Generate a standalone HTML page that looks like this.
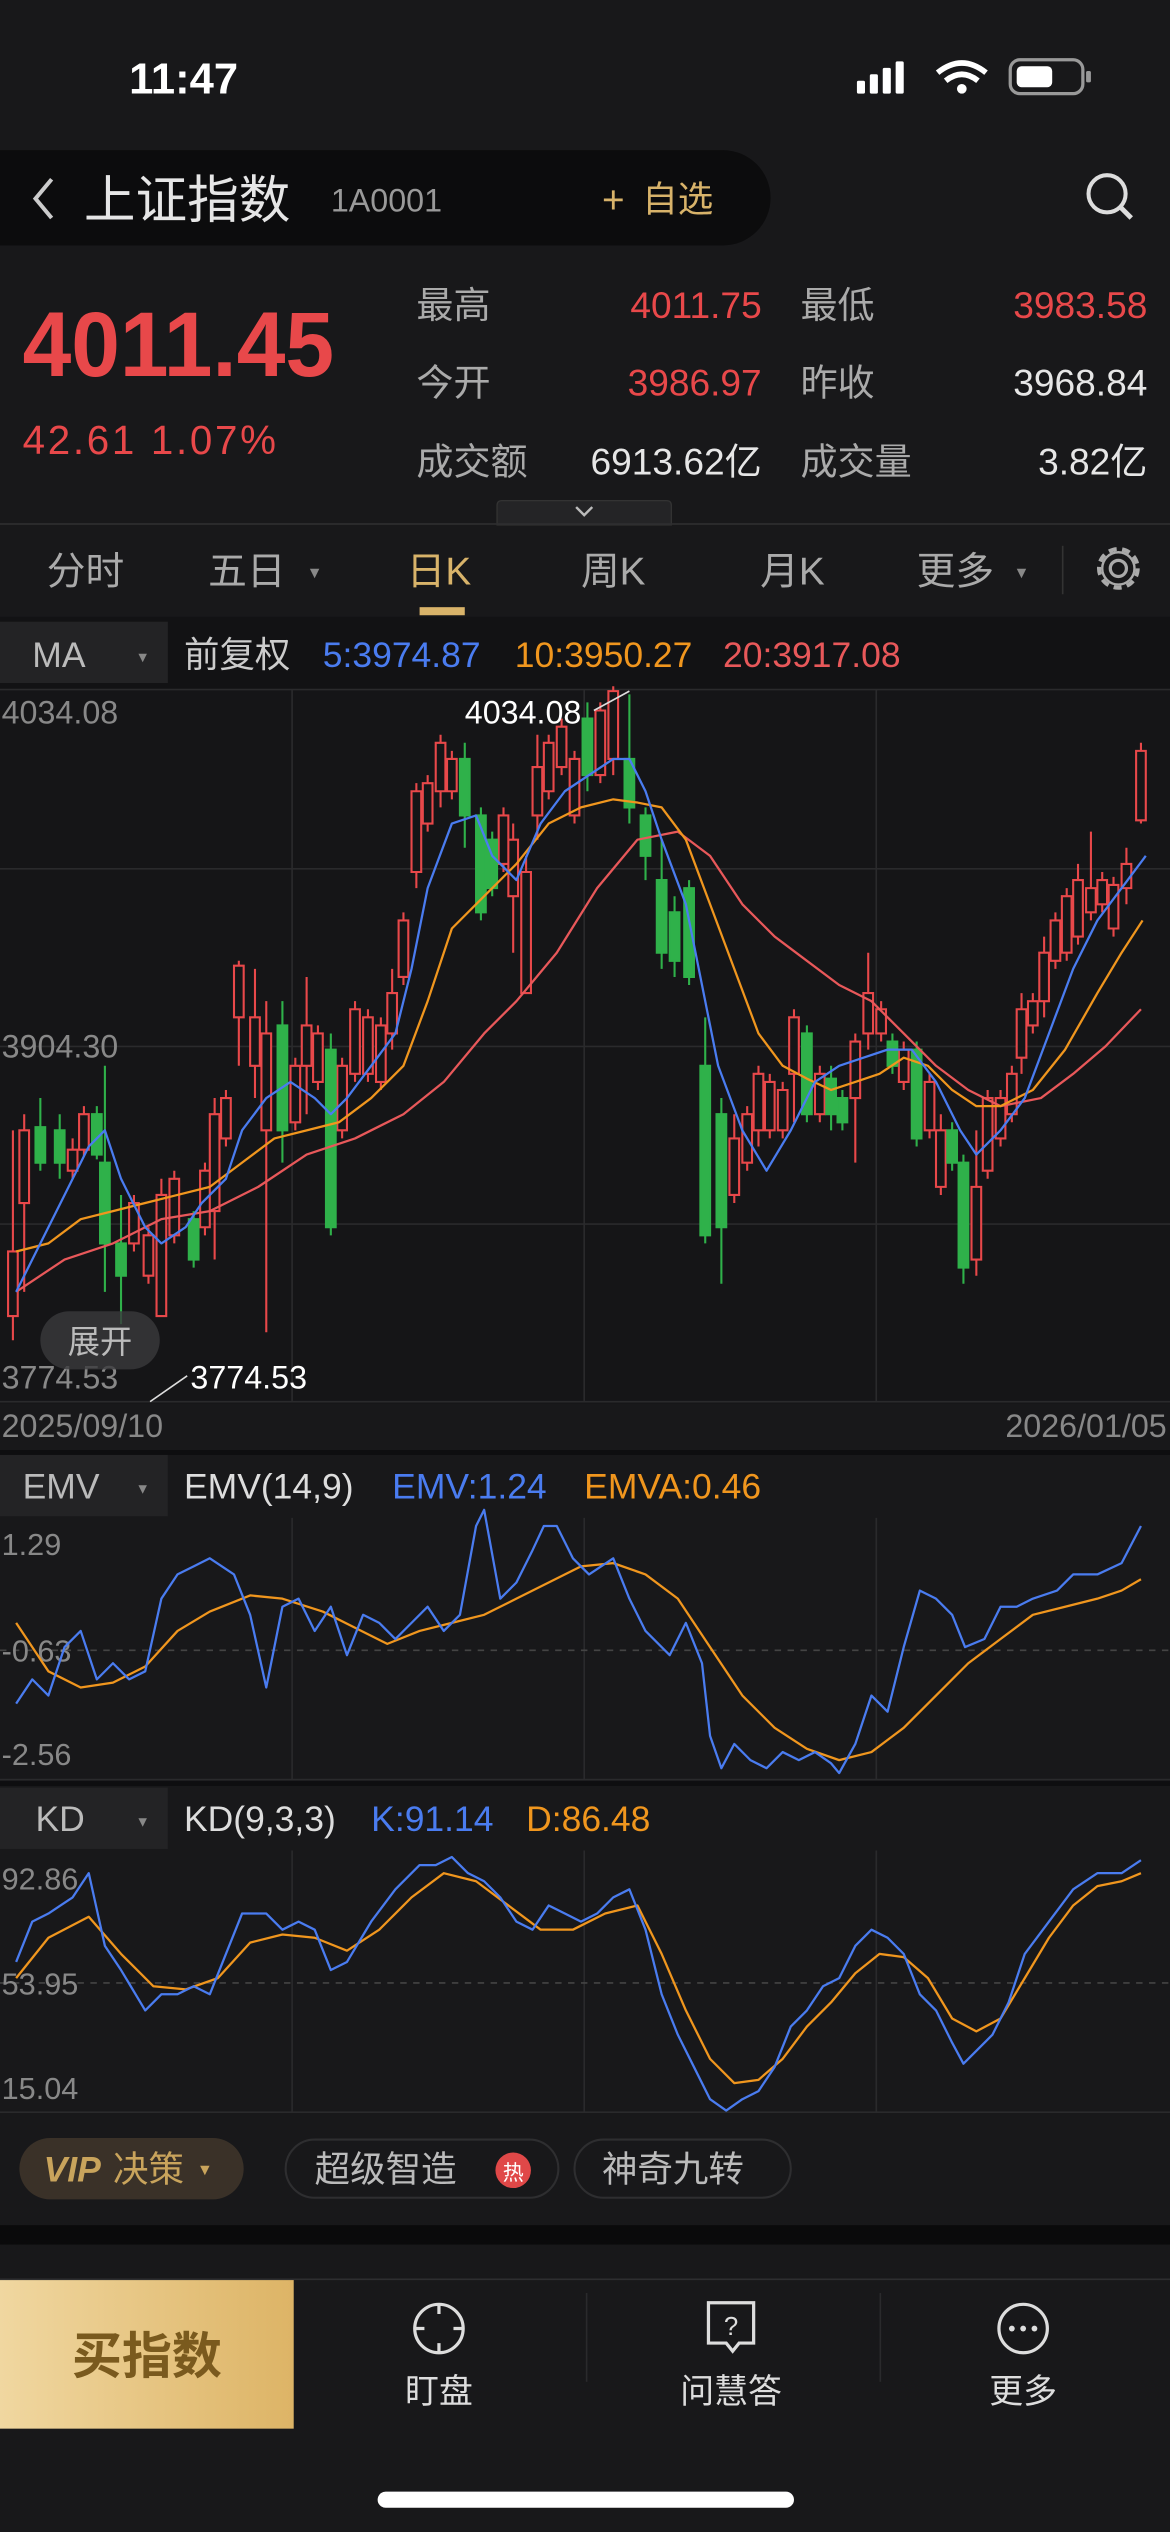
<!DOCTYPE html>
<html><head><meta charset="utf-8"><style>
html,body{margin:0;padding:0;background:#18181a;}
svg{display:block;}
text{font-family:"Liberation Sans","Noto Sans CJK SC",sans-serif;}
</style></head><body>
<svg width="1170" height="2532" viewBox="0 0 725 1568" preserveAspectRatio="none" xmlns="http://www.w3.org/2000/svg">
<rect width="725" height="1568" fill="#18181a"/>
<!-- status bar -->
<text x="80" y="58" font-size="27" font-weight="bold" fill="#fff">11:47</text>
<rect x="531" y="50" width="5" height="8" rx="1" fill="#fff"/><rect x="539" y="46" width="5" height="12" rx="1" fill="#fff"/><rect x="547" y="42" width="5" height="16" rx="1" fill="#fff"/><rect x="555" y="38" width="5" height="20" rx="1" fill="#fff"/>
<path d="M581 45 Q596 33 611 45" stroke="#fff" stroke-width="3.5" fill="none"/><path d="M586 50 Q596 42 606 50" stroke="#fff" stroke-width="3.5" fill="none"/><circle cx="596" cy="55" r="3" fill="#fff"/>
<rect x="626" y="37" width="45" height="21" rx="6" fill="none" stroke="#999" stroke-width="2"/><rect x="630" y="41" width="22" height="13" rx="3" fill="#fff"/><rect x="673" y="44" width="3" height="7" rx="1" fill="#999"/>
<!-- header -->
<path d="M0 93 H448 A29.5 29.5 0 0 1 448 152 H0 Z" fill="#0c0c0d"/>
<path d="M32 111 L22 123 L32 135" stroke="#ccc" stroke-width="2.5" fill="none"/>
<text x="52" y="135" font-size="32" fill="#e6e6e6">上证指数</text>
<text x="205" y="131" font-size="20" fill="#999">1A0001</text>
<text x="373" y="132" font-size="24" fill="#d8b36a">+</text>
<text x="398" y="131" font-size="22" fill="#d8b36a">自选</text>
<circle cx="686" cy="120" r="11.5" stroke="#ddd" stroke-width="2.5" fill="none"/><path d="M694 128 L701 135" stroke="#ddd" stroke-width="3"/>
<!-- price -->
<text x="14" y="233" font-size="57" font-weight="bold" fill="#e8484a" textLength="193" lengthAdjust="spacingAndGlyphs">4011.45</text>
<text x="14" y="281" font-size="25" fill="#e8484a" textLength="157" lengthAdjust="spacing">42.61  1.07%</text>
<g font-size="23" fill="#aaa"><text x="258" y="197">最高</text><text x="496" y="197">最低</text><text x="258" y="245">今开</text><text x="496" y="245">昨收</text><text x="258" y="294">成交额</text><text x="496" y="294">成交量</text></g>
<g font-size="23" text-anchor="end"><text x="472" y="197" fill="#e8484a">4011.75</text><text x="711" y="197" fill="#e8484a">3983.58</text><text x="472" y="245" fill="#e8484a">3986.97</text><text x="711" y="245" fill="#e6e6e6">3968.84</text><text x="472" y="294" fill="#e6e6e6">6913.62亿</text><text x="711" y="294" fill="#e6e6e6">3.82亿</text></g>
<path d="M308 325 V313 Q308 310 311 310 H413 Q416 310 416 313 V325 Z" fill="#242426" stroke="#333" stroke-width="0.8"/>
<path d="M357 314 L362 319 L367 314" stroke="#bbb" stroke-width="1.5" fill="none"/>
<rect x="0" y="324" width="725" height="1" fill="#2e2e30"/>
<!-- tabs -->
<g font-size="24" fill="#aaa"><text x="29" y="362">分时</text><text x="129" y="362">五日</text><text x="360" y="362">周K</text><text x="471" y="362">月K</text><text x="568" y="362">更多</text></g>
<g font-size="10" fill="#888"><text x="190" y="358">▼</text><text x="628" y="358">▼</text></g>
<text x="252" y="362" font-size="24" fill="#d8b36a">日K</text>
<rect x="260" y="376" width="28" height="5" fill="#d8b36a"/>
<rect x="658" y="338" width="1" height="30" fill="#333"/>
<circle cx="693" cy="352" r="5" stroke="#aaa" stroke-width="2" fill="none"/><circle cx="693" cy="352" r="12" stroke="#aaa" stroke-width="2.5" stroke-dasharray="5 3.4" fill="none"/><circle cx="693" cy="352" r="10" stroke="#aaa" stroke-width="1.5" fill="none"/>
<!-- MA row -->
<rect x="0" y="382" width="725" height="45" fill="#121214"/>
<rect x="0" y="385" width="104" height="38" fill="#232325"/>
<text x="20" y="413" font-size="22" fill="#bbb">MA</text><text x="84" y="410" font-size="9" fill="#888">▼</text>
<text x="114" y="413" font-size="22" fill="#ccc">前复权</text>
<text x="200" y="413" font-size="22" fill="#4a7cf0">5:3974.87</text>
<text x="319" y="413" font-size="22" fill="#f0961e">10:3950.27</text>
<text x="448" y="413" font-size="22" fill="#e8585a">20:3917.08</text>
<!-- main chart -->
<rect x="0" y="427" width="725" height="442" fill="#151517"/>
<g stroke="#2a2a2c" stroke-width="1"><path d="M0 427H725M0 538H725M0 648H725M0 758H725M0 868H725M181 427V868M362 427V868M543 427V868"/></g>
<g id="candles" stroke-width="1.3">
<g stroke="#e8484a" fill="#151517">
<path d="M8 700V830M15 690V800M45 705V730M52 685V716M83 740V775M92 760V795M100 730V815M108 725V770M127 720V765M133 680V780M140 675V710M148 595V660M158 600V680M165 620V825M183 655V700M190 605V690M197 635V675M212 655V705M220 620V670M228 625V670M236 630V675M243 600V650M250 565V610M258 485V550M265 480V515M273 455V500M280 465V495M312 500V540M318 510V590M326 530V615M333 455V520M340 455V495M348 445V480M356 465V510M372 435V485M380 425V480M455 690V745M463 685V725M470 660V710M477 665V705M485 670V705M492 625V695M508 660V695M530 640V720M538 590V650M546 620V645M560 645V675M576 665V705M583 690V740M605 700V790M612 675V730M620 675V710M627 660V695M633 615V665M640 615V640M647 580V630M654 565V600M661 550V595M668 535V585M676 515V570M683 540V565M690 543V580M698 525V560M707 460V510"/>
<path d="M5 775h6v40h-6zM12 700h6v45h-6zM42 712h6v13h-6zM49 690h6v22h-6zM80 745h6v25h-6zM89 765h6v25h-6zM97 740h6v75h-6zM105 730h6v35h-6zM124 725h6v35h-6zM130 690h6v60h-6zM137 680h6v25h-6zM145 598h6v32h-6zM155 630h6v30h-6zM162 640h6v60h-6zM180 660h6v35h-6zM187 635h6v25h-6zM194 640h6v30h-6zM209 660h6v40h-6zM217 625h6v40h-6zM225 630h6v35h-6zM233 635h6v35h-6zM240 615h6v25h-6zM247 570h6v35h-6zM255 490h6v50h-6zM262 485h6v25h-6zM270 460h6v30h-6zM277 470h6v20h-6zM309 505h6v30h-6zM315 520h6v35h-6zM323 540h6v75h-6zM330 475h6v30h-6zM337 460h6v30h-6zM345 450h6v25h-6zM353 470h6v35h-6zM369 440h6v40h-6zM377 428h6v42h-6zM452 705h6v35h-6zM460 690h6v30h-6zM467 665h6v35h-6zM474 670h6v30h-6zM482 675h6v25h-6zM489 630h6v35h-6zM505 665h6v25h-6zM527 645h6v35h-6zM535 615h6v25h-6zM543 625h6v15h-6zM557 650h6v20h-6zM573 670h6v30h-6zM580 700h6v35h-6zM602 735h6v45h-6zM609 680h6v45h-6zM617 680h6v25h-6zM624 665h6v25h-6zM630 625h6v30h-6zM637 620h6v15h-6zM644 590h6v30h-6zM651 570h6v25h-6zM658 555h6v35h-6zM665 545h6v35h-6zM673 550h6v15h-6zM680 545h6v15h-6zM687 548h6v27h-6zM695 535h6v15h-6zM704 465h6v43h-6z"/>
</g>
<g stroke="#2fb14a" fill="#2fb14a">
<path d="M25 680V725M37 690V730M60 685V718M65 660V800M75 740V820M120 750V785M175 620V720M205 640V765M288 460V525M298 500V570M305 515V555M364 435V490M390 430V510M400 500V545M410 520V600M418 555V605M427 545V610M437 630V770M447 680V795M500 635V695M515 660V700M522 675V700M553 640V665M568 645V710M590 695V725M597 715V795"/>
<path d="M22 698h6v22h-6zM34 700h6v20h-6zM57 690h6v25h-6zM62 720h6v50h-6zM72 770h6v20h-6zM117 755h6v25h-6zM172 635h6v65h-6zM202 650h6v110h-6zM285 470h6v35h-6zM295 505h6v60h-6zM302 520h6v30h-6zM361 445h6v35h-6zM387 470h6v30h-6zM397 505h6v25h-6zM407 545h6v45h-6zM415 565h6v30h-6zM424 550h6v55h-6zM434 660h6v105h-6zM444 690h6v70h-6zM497 640h6v50h-6zM512 668h6v22h-6zM519 680h6v15h-6zM550 645h6v15h-6zM565 650h6v55h-6zM587 700h6v20h-6zM594 720h6v65h-6z"/>
</g>
</g>
<g fill="none" stroke-width="1.4" stroke-linejoin="round">
<polyline stroke="#e8585a" points="10,800 40,780 70,770 100,755 130,750 160,735 190,715 220,705 250,690 275,670 300,640 320,620 345,590 370,550 395,520 420,515 440,530 460,560 480,580 500,595 520,610 540,620 560,640 580,660 600,675 620,685 645,680 665,665 685,648 707,625"/>
<polyline stroke="#f0961e" points="10,775 30,770 50,755 70,750 90,745 110,740 130,735 150,720 170,705 190,700 210,695 230,680 250,660 265,620 280,575 300,555 320,535 340,510 360,500 380,495 395,497 410,500 425,520 440,560 455,600 470,640 485,660 500,668 515,675 530,670 545,665 560,655 575,660 590,675 605,685 620,685 640,675 660,650 680,615 695,590 708,570"/>
<polyline stroke="#4a7cf0" points="10,800 20,780 40,740 55,710 65,700 75,730 90,760 100,770 115,760 125,745 140,730 150,700 165,680 180,670 195,680 205,690 215,680 230,660 245,640 255,600 265,550 280,510 295,505 305,530 320,545 335,510 350,490 365,480 380,470 390,470 400,490 410,520 425,560 435,610 445,660 460,700 475,725 490,700 505,670 520,660 535,655 550,650 565,650 580,670 595,700 605,715 620,700 635,680 650,640 665,600 680,570 695,550 710,530"/>
</g>
<g font-size="20" fill="#888"><text x="1" y="448">4034.08</text><text x="1" y="655">3904.30</text><text x="1" y="860">3774.53</text><text x="1" y="890">2025/09/10</text><text x="723" y="890" text-anchor="end">2026/01/05</text></g>
<text x="288" y="448" font-size="20" fill="#fff">4034.08</text><path d="M368 440 L390 428" stroke="#ddd" stroke-width="1"/>
<text x="118" y="860" font-size="20" fill="#fff">3774.53</text><path d="M93 868 L116 852" stroke="#ddd" stroke-width="1"/>
<rect x="25" y="812" width="74" height="36" rx="18" fill="#3a3a3c" fill-opacity="0.8"/><text x="62" y="838" font-size="20" fill="#bbb" text-anchor="middle">展开</text>
<!-- EMV -->
<rect x="0" y="898" width="725" height="3" fill="#0e0e10"/>
<rect x="0" y="901" width="104" height="38" fill="#232325"/>
<text x="14" y="928" font-size="22" fill="#bbb">EMV</text><text x="84" y="925" font-size="9" fill="#888">▼</text>
<text x="114" y="928" font-size="22" fill="#ddd">EMV(14,9)</text><text x="243" y="928" font-size="22" fill="#4a7cf0">EMV:1.24</text><text x="362" y="928" font-size="22" fill="#f0961e">EMVA:0.46</text>
<g stroke="#2a2a2c"><path d="M181 940V1102M362 940V1102M543 940V1102M0 1102H725"/></g>
<path d="M0 1022H725" stroke="#444" stroke-dasharray="4 4"/>
<g font-size="19" fill="#888"><text x="1" y="963">1.29</text><text x="1" y="1029">-0.63</text><text x="1" y="1093">-2.56</text></g>
<g fill="none" stroke-width="1.4" stroke-linejoin="round">
<polyline stroke="#f0961e" points="10,1005 30,1035 50,1045 70,1042 90,1032 110,1010 130,998 155,988 175,990 200,998 220,1008 240,1018 260,1010 280,1005 300,1000 320,990 340,980 360,970 380,968 400,975 420,990 440,1020 460,1050 480,1070 500,1083 520,1090 540,1085 560,1070 580,1050 600,1030 620,1015 640,1000 660,995 680,990 695,985 707,978"/>
<polyline stroke="#4a7cf0" points="10,1055 20,1040 30,1050 40,1020 50,1010 60,1040 70,1030 80,1040 90,1035 100,990 110,975 120,970 130,965 145,975 155,1000 165,1045 175,995 185,990 195,1010 205,995 215,1025 225,1000 235,1005 245,1015 255,1005 265,995 275,1010 285,1000 295,945 300,935 310,990 320,980 330,960 337,945 345,945 355,965 365,975 380,965 390,990 400,1010 415,1025 425,1005 435,1030 440,1075 447,1095 455,1080 465,1090 475,1095 485,1085 495,1090 505,1085 515,1092 520,1098 530,1080 540,1050 550,1060 560,1020 570,985 580,990 590,1000 598,1020 610,1015 620,995 630,995 640,990 655,985 665,975 680,975 695,968 707,945"/>
</g>
<!-- KD -->
<rect x="0" y="1103" width="725" height="3" fill="#0e0e10"/>
<rect x="0" y="1107" width="104" height="38" fill="#232325"/>
<text x="22" y="1134" font-size="22" fill="#bbb">KD</text><text x="84" y="1131" font-size="9" fill="#888">▼</text>
<text x="114" y="1134" font-size="22" fill="#ddd">KD(9,3,3)</text><text x="230" y="1134" font-size="22" fill="#4a7cf0">K:91.14</text><text x="326" y="1134" font-size="22" fill="#f0961e">D:86.48</text>
<g stroke="#2a2a2c"><path d="M181 1146V1308M362 1146V1308M543 1146V1308M0 1308H725"/></g>
<path d="M0 1228H725" stroke="#444" stroke-dasharray="4 4"/>
<g font-size="19" fill="#888"><text x="1" y="1170">92.86</text><text x="1" y="1235">53.95</text><text x="1" y="1300">15.04</text></g>
<g fill="none" stroke-width="1.4" stroke-linejoin="round">
<polyline stroke="#f0961e" points="10,1225 30,1200 55,1187 75,1210 95,1230 115,1232 135,1225 155,1203 175,1198 195,1200 215,1208 235,1195 255,1175 275,1160 295,1165 315,1180 335,1195 355,1195 375,1185 395,1180 410,1210 425,1245 440,1275 455,1290 470,1288 485,1275 500,1255 515,1240 530,1222 545,1210 560,1212 575,1225 590,1250 605,1258 620,1250 635,1225 650,1200 665,1180 680,1168 695,1165 707,1160"/>
<polyline stroke="#4a7cf0" points="10,1215 20,1190 30,1185 45,1175 55,1160 65,1205 75,1220 90,1245 100,1235 110,1235 120,1230 130,1235 140,1210 150,1185 165,1185 175,1195 185,1190 195,1195 205,1220 215,1215 230,1190 245,1170 260,1155 270,1155 280,1150 290,1160 300,1165 310,1175 320,1190 330,1195 340,1180 350,1185 360,1190 370,1185 380,1175 390,1170 400,1195 410,1235 420,1260 430,1280 440,1300 450,1307 460,1300 470,1295 480,1280 490,1255 500,1245 510,1230 520,1225 530,1205 540,1195 550,1200 560,1210 570,1235 580,1245 590,1265 597,1278 605,1270 615,1260 625,1240 635,1210 650,1190 665,1170 680,1160 695,1160 707,1152"/>
</g>
<!-- feature buttons -->
<rect x="12" y="1324" width="139" height="38" rx="19" fill="#3a3128"/>
<text x="27" y="1351" font-size="22" font-weight="bold" font-style="italic" fill="#c9a45c">VIP</text><text x="70" y="1351" font-size="22" fill="#c9a45c">决策</text><text x="122" y="1347" font-size="10" fill="#c9a45c">▼</text>
<rect x="177" y="1325" width="169" height="36" rx="18" fill="none" stroke="#2e2e30" stroke-width="1.3"/>
<text x="195" y="1351" font-size="22" fill="#bbb">超级智造</text>
<circle cx="318" cy="1344" r="11" fill="#e04848"/><text x="318" y="1350" font-size="13" fill="#fff" text-anchor="middle">热</text>
<rect x="356" y="1325" width="134" height="36" rx="18" fill="none" stroke="#2e2e30" stroke-width="1.3"/>
<text x="373" y="1351" font-size="22" fill="#bbb">神奇九转</text>
<rect x="0" y="1378" width="725" height="12" fill="#0a0a0b"/>
<rect x="0" y="1411" width="725" height="1" fill="#2e2e30"/>
<!-- bottom bar -->
<defs><linearGradient id="g" x1="0" x2="1"><stop offset="0" stop-color="#f0d7a0"/><stop offset="1" stop-color="#ddb466"/></linearGradient></defs>
<rect x="0" y="1412" width="182" height="92" fill="url(#g)"/>
<text x="91" y="1470" font-size="31" font-weight="bold" fill="#7a5a1e" text-anchor="middle">买指数</text>
<circle cx="272" cy="1442" r="15" stroke="#ddd" stroke-width="2" fill="none"/>
<path d="M272 1427v6M272 1451v6M257 1442h6M281 1442h6" stroke="#ddd" stroke-width="2"/>
<path d="M439 1426h28v25h-9l-4 5-4-5h-11z" stroke="#ddd" stroke-width="2" fill="none"/>
<text x="453" y="1446" font-size="16" fill="#ddd" text-anchor="middle">?</text>
<circle cx="634" cy="1442" r="15" stroke="#ddd" stroke-width="2" fill="none"/>
<circle cx="627" cy="1442" r="1.8" fill="#ddd"/><circle cx="634" cy="1442" r="1.8" fill="#ddd"/><circle cx="641" cy="1442" r="1.8" fill="#ddd"/>
<g font-size="21" fill="#ddd" text-anchor="middle"><text x="272" y="1488">盯盘</text><text x="453" y="1488">问慧答</text><text x="634" y="1488">更多</text></g>
<rect x="363" y="1420" width="1" height="55" fill="#2a2a2c"/><rect x="545" y="1420" width="1" height="55" fill="#2a2a2c"/>
<rect x="234" y="1543" width="258" height="10" rx="5" fill="#fff"/>
</svg>
</body></html>
